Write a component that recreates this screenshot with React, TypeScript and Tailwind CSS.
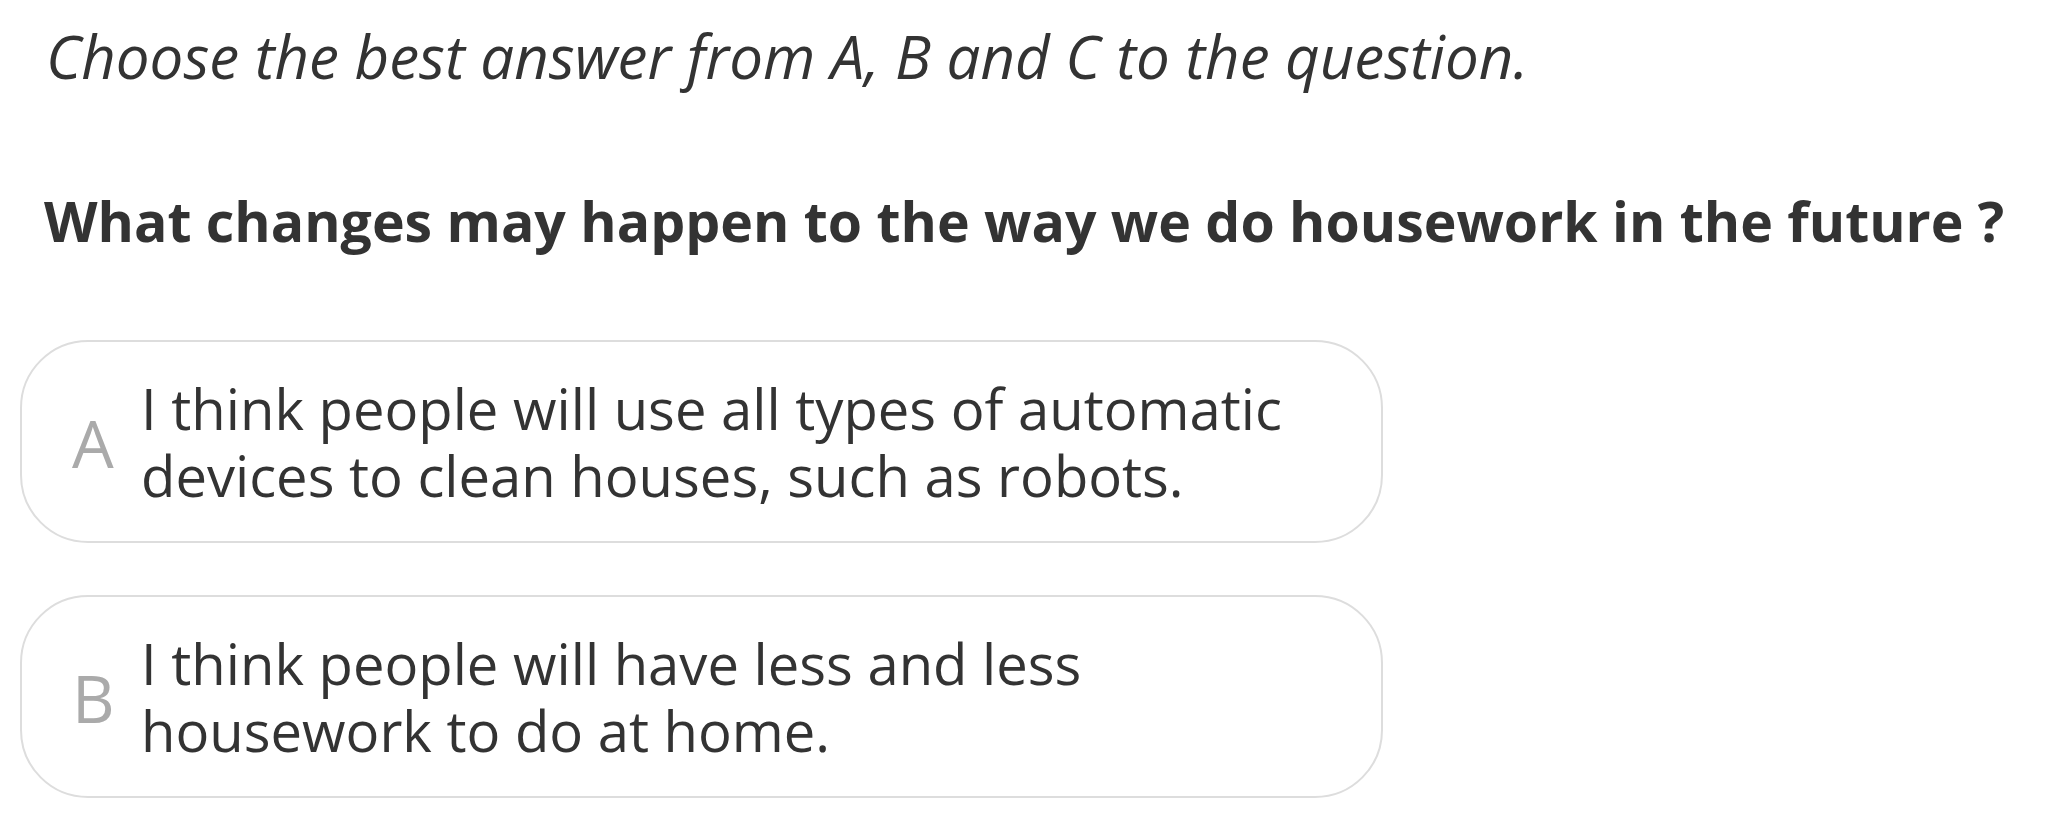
import React from "react";

const options = [
  { letter: "A", lines: ["I think people will use all types of automatic", "devices to clean houses, such as robots."] },
  { letter: "B", lines: ["I think people will have less and less", "housework to do at home."] },
];

export default function App() {
  return (
    <div
      className="w-[2067px] h-[832px] bg-white text-[#333333] overflow-hidden"
      style={{ fontFamily: '"Open Sans", "Noto Sans", sans-serif' }}
    >
      <p className="pt-[16px] pl-[46px] italic text-[60px] leading-[80px] whitespace-nowrap">
        Choose the best answer from A, B and C to the question.
      </p>
      <h2 className="mt-[86px] pl-[44px] font-bold text-[55.4px] leading-[78px] whitespace-nowrap">
        What changes may happen to the way we do housework in the future ?
      </h2>
      <div className="mt-[80px] pl-[20px] flex flex-col gap-[52px]">
        {options.map((o) => (
          <div
            key={o.letter}
            className="w-[1363px] h-[203px] border-2 border-[#dddddd] rounded-[68px] flex items-center"
          >
            <span className="w-[119px] shrink-0 pl-[50px] text-[#aaaaaa] text-[66px] leading-none">{o.letter}</span>
            <div className="text-[56.2px] leading-[67px] whitespace-nowrap">
              {o.lines.map((l) => (
                <div key={l}>{l}</div>
              ))}
            </div>
          </div>
        ))}
      </div>
    </div>
  );
}
